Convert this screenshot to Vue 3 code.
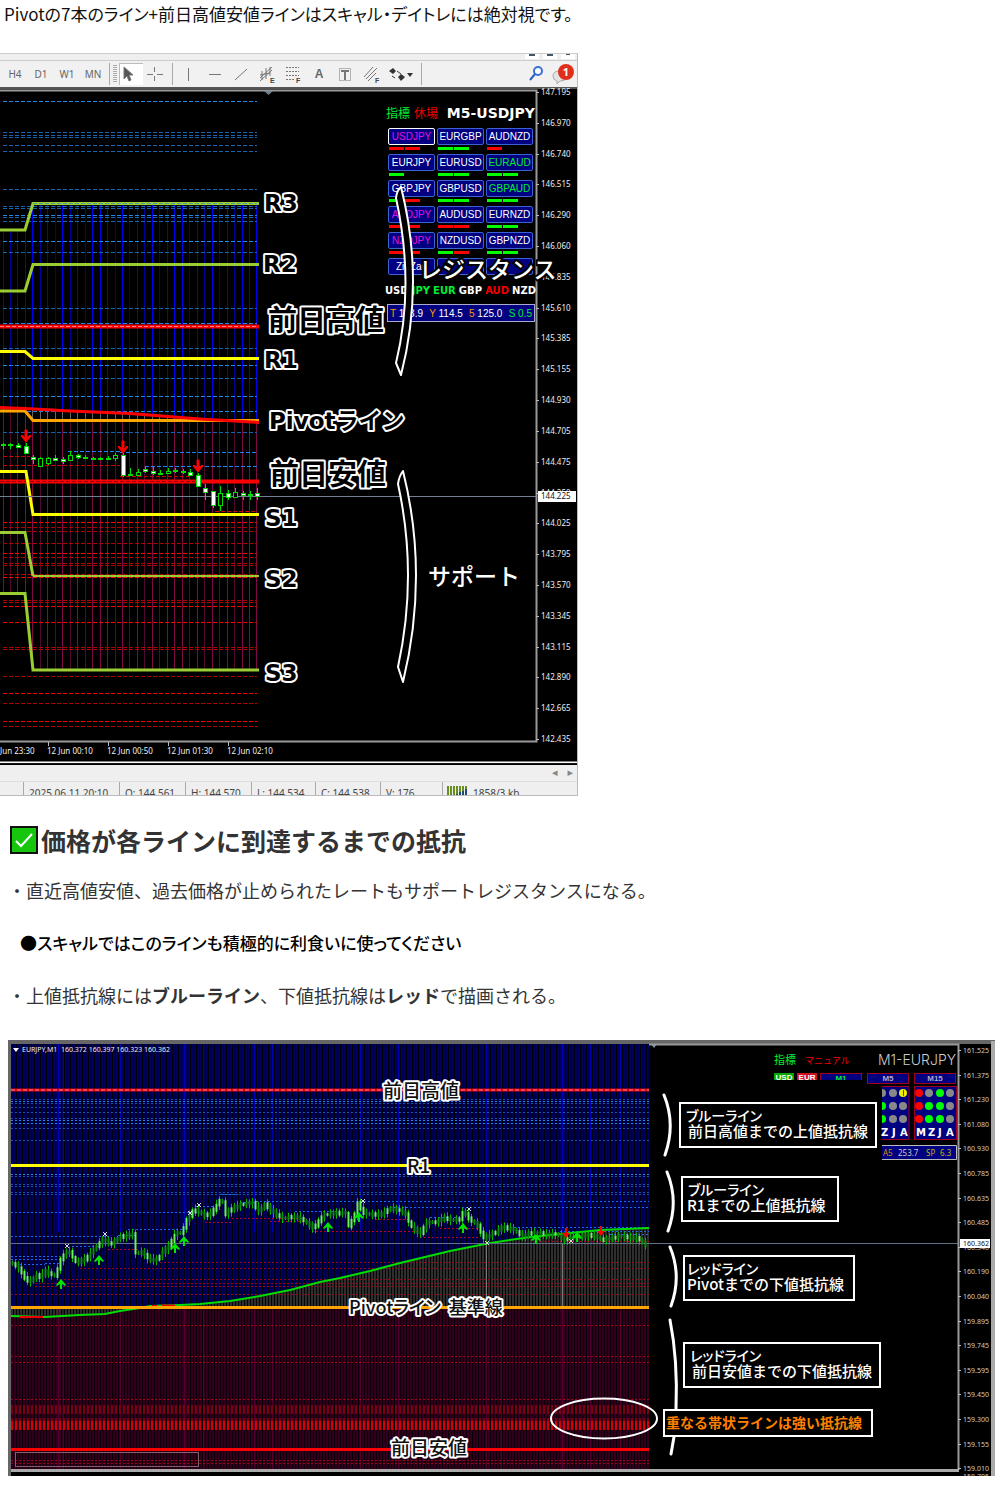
<script setup>
const blueLevels = [
  [101, 1], [132, 0], [135, 0], [137, 0], [145, 0], [151, 0], [189, 0], [206, 0], [208, 0], [215, 1], [217, 0], [221, 0],
  [241, 1], [252, 0], [308, 0], [323, 1], [348, 0], [365, 1], [378, 0], [396, 1], [411, 1], [432, 0],
]
const redLevels = [
  [522, 1], [527, 0], [531, 0], [543, 0], [553, 1], [557, 0], [563, 0], [565, 0], [574, 0], [577, 1], [600, 0], [602, 0],
  [606, 1], [622, 1], [647, 0], [649, 0], [676, 0], [693, 1], [703, 0], [721, 1], [726, 0],
]
const shortLevels = [
  [68, 120, 451, 'b'], [120, 257, 452, 'b'], [145, 257, 466, 'b'],
  [3, 30, 456, 'r'], [3, 120, 465, 'r'], [120, 190, 476, 'r'], [215, 257, 511, 'r'],
]

const maY = (x) => (x < 130 ? 407 + x * 0.05 : 413.5 + (x - 130) * 0.07)
const bars = Array.from({ length: 35 }, (_, i) => {
  const x = Math.floor(3 + i * 7.47) + 0.5
  const early = x < 30
  return {
    x,
    top: early ? 230 : 204,
    mid: maY(x),
    pivot: early ? 411 : Math.max(420, maY(x)),
    bottom: early ? 593 : 670,
    bright: i % 2 === 0 || i % 5 === 3,
  }
})

// x, high, low, body top, body bottom, kind (f filled, h hollow)
const candles = [
  [3, 443, 449, 444, 445, 'h'], [10, 443, 449, 444, 445, 'h'], [18, 443, 448, 445, 447, 'f'], [26, 443, 454, 446, 453, 'f'],
  [33, 455, 464, 457, 459, 'f'], [40, 457, 467, 458, 466, 'h'], [48, 457, 465, 458, 463, 'h'], [55, 455, 461, 458, 460, 'f'],
  [63, 457, 464, 459, 461, 'f'], [70, 451, 461, 455, 460, 'h'], [78, 454, 459, 455, 457, 'f'], [85, 455, 459, 457, 458, 'h'],
  [93, 457, 459, 458, 459, 'h'], [100, 457, 459, 458, 459, 'h'], [108, 456, 460, 458, 459, 'h'], [115, 453, 461, 455, 458, 'h'],
  [123, 452, 477, 455, 475, 'f'], [130, 468, 476, 474, 475, 'h'], [138, 469, 476, 472, 475, 'h'], [145, 467, 473, 469, 471, 'f'],
  [153, 467, 475, 471, 473, 'f'], [160, 470, 475, 473, 474, 'h'], [168, 468, 474, 471, 473, 'h'], [175, 468, 473, 470, 471, 'h'],
  [183, 469, 474, 471, 472, 'f'], [190, 469, 476, 472, 475, 'f'], [198, 473, 487, 475, 486, 'f'], [205, 484, 500, 488, 492, 'f'],
  [213, 491, 508, 491, 505, 'f'], [220, 486, 511, 493, 505, 'h'], [228, 490, 500, 493, 497, 'f'], [235, 488, 498, 492, 497, 'h'],
  [243, 491, 500, 493, 495, 'f'], [250, 491, 500, 494, 495, 'h'], [257, 488, 500, 493, 496, 'f'],
]
const sellMarks = [[26, 442], [123, 453], [198, 472]]

const prices = ['147.195', '146.970', '146.740', '146.515', '146.290', '146.060', '145.835', '145.610', '145.385', '145.155',
  '144.930', '144.705', '144.475', '144.250', '144.025', '143.795', '143.570', '143.345', '143.115', '142.890', '142.665', '142.435']
const times = ['12 Jun 00:10', '12 Jun 00:50', '12 Jun 01:30', '12 Jun 02:10']

const pairs = [
  ['USDJPY', 'm', 'rr'], ['EURGBP', 'w', 'gg'], ['AUDNZD', 'w', 'r'],
  ['EURJPY', 'w', 'g'], ['EURUSD', 'w', 'gg'], ['EURAUD', 'g', 'gg'],
  ['GBPJPY', 'w', 'gr'], ['GBPUSD', 'w', 'gg'], ['GBPAUD', 'g', 'gg'],
  ['AUDJPY', 'm', 'rr'], ['AUDUSD', 'w', 'rr'], ['EURNZD', 'w', 'gg'],
  ['NZDJPY', 'm', 'rr'], ['NZDUSD', 'w', 'gr'], ['GBPNZD', 'w', 'gg'],
  ['ZigZag', 'w', ''], ['', 'w', ''], ['', 'g', ''],
]
const currencies = [['USD', 'w'], ['JPY', 'g'], ['EUR', 'g'], ['GBP', 'w'], ['AUD', 'r'], ['NZD', 'w']]
const readings = [['T', '113.9', 'o'], ['Y', '114.5', 'o'], ['5', '125.0', 'o']]

const lineLabels = [
  ['R3', 264, 211, 'wide'], ['R2', 263, 272, 'wide'], ['前日高値', 268, 331, 'kanji'], ['R1', 264, 368, 'wide'],
  ['Pivotライン', 269, 429, 'wide'], ['前日安値', 270, 485, 'kanji'], ['S1', 265, 526, 'wide'], ['S2', 265, 587, 'wide'], ['S3', 265, 681, 'wide'],
]

const status = [['', 24], ['2025.06.11 20:10', 96], ['O: 144.561', 66], ['H: 144.570', 66], ['L: 144.534', 64], ['C: 144.538', 65], ['V: 176', 62]]

// ---- EURJPY chart ----
const blue2 = [[1099, 0], [1101, 1], [1103, 0], [1107, 0], [1112, 0], [1118, 0], [1120, 1], [1123, 1], [1128, 0], [1140, 0],
  [1174, 1], [1176, 0], [1184, 0], [1186, 0], [1192, 0], [1194, 0]]
const blueParts = [[11, 200, 1212], [11, 110, 1236], [11, 60, 1256], [11, 60, 1259], [20, 45, 1264], [45, 60, 1263], [72, 98, 1246],
  [118, 135, 1235], [128, 182, 1229], [195, 215, 1206], [221, 238, 1194], [240, 256, 1202], [256, 649, 1201], [295, 340, 1211], [390, 649, 1207],
  [430, 460, 1217], [510, 649, 1227], [560, 649, 1231], [610, 649, 1234]]
const red2 = [[1262, 160], [1268, 80], [1279, 60], [1283, 35], [1286, 35], [1294, 11], [1325, 11], [1356, 11], [1362, 11], [1399, 11], [1460, 11], [1463, 11]]
const redBand = [[1406, 0], [1409, 0], [1412, 0], [1419, 0], [1422, 1], [1425, 1], [1428, 1]]
const redParts = [[108, 138, 1249], [205, 232, 1222], [232, 308, 1218], [270, 310, 1221], [312, 420, 1231], [375, 410, 1219], [420, 480, 1237], [440, 480, 1228], [540, 649, 1241]]

const trace = [[11, 1262], [20, 1266], [25, 1275], [32, 1283], [38, 1275], [43, 1278], [47, 1270], [52, 1274], [58, 1276], [62, 1262],
  [67, 1253], [72, 1252], [78, 1262], [82, 1262], [90, 1257], [98, 1247], [105, 1240], [115, 1244], [120, 1238], [128, 1236], [135, 1234],
  [138, 1253], [145, 1252], [150, 1258], [158, 1261], [165, 1252], [172, 1245], [178, 1233], [184, 1233], [190, 1218], [197, 1209],
  [203, 1213], [208, 1216], [214, 1213], [219, 1205], [224, 1198], [228, 1214], [235, 1208], [245, 1204], [255, 1203], [262, 1212],
  [267, 1204], [275, 1212], [285, 1218], [300, 1217], [308, 1222], [315, 1228], [320, 1223], [325, 1215], [340, 1213], [348, 1213],
  [350, 1228], [357, 1215], [360, 1203], [366, 1213], [375, 1215], [385, 1214], [393, 1208], [407, 1212], [413, 1226], [422, 1234],
  [430, 1222], [440, 1222], [446, 1217], [452, 1220], [462, 1220], [466, 1210], [472, 1220], [479, 1224], [486, 1238], [495, 1234],
  [505, 1227], [515, 1229], [525, 1236], [535, 1232], [545, 1234], [560, 1234], [566, 1240], [575, 1237], [595, 1235], [605, 1240],
  [622, 1236], [632, 1238], [640, 1238], [649, 1246]]
const priceAt = (x) => {
  const i = Math.max(1, trace.findIndex((p) => p[0] >= x))
  const [a, b] = [trace[i - 1], trace[i]]
  return a[1] + ((b[1] - a[1]) * (x - a[0])) / (b[0] - a[0])
}
const ticks2 = Array.from({ length: 212 }, (_, i) => {
  const x = 12 + i * 3
  const y0 = priceAt(x)
  const y1 = priceAt(Math.min(649, x + 3))
  const w = (n) => ((i * n) % 7) / 2
  const top = Math.min(y0, y1) - 1 - w(3) / 2
  const bottom = Math.max(y0, y1) + 1 + w(5) / 2
  return { x, top, bottom, hi: top - w(4) - 1, lo: bottom + w(2) + 1, light: i % 4 === 1 || bottom - top > 8 }
})
const ma = '11,1316 45,1317 80,1315 105,1314 120,1311 140,1308 150,1306 180,1305 200,1304 230,1301 260,1296 290,1290 320,1282 340,1278 370,1271 400,1263 450,1251 490,1243 530,1237 570,1233 600,1230 649,1228'
const brightBars = [58, 63, 120, 184, 203, 254, 272, 360, 398, 486, 501, 562, 590, 620]
const buyMarks = [[61, 1279], [99, 1255], [175, 1243], [184, 1236], [328, 1222], [359, 1212], [463, 1223], [536, 1234], [577, 1232]]
const sellMarks2 = [[566, 1238], [601, 1236]]
const crosses = [[67, 1246], [105, 1234], [190, 1213], [199, 1205], [363, 1201], [469, 1209], [487, 1243], [571, 1241]]
const prices2 = ['161.525', '161.375', '161.230', '161.080', '160.930', '160.785', '160.635', '160.485', '160.340', '160.190',
  '160.040', '159.895', '159.745', '159.595', '159.450', '159.300', '159.155', '159.010']
const dots = [
  [882, 1093, 'n'], [893, 1093, 'n'], [903, 1093, 'y'], [882, 1106, 'g'], [893, 1106, 'n'], [903, 1106, 'n'],
  [882, 1119, 'g'], [893, 1119, 'n'], [903, 1119, 'n'],
  [919, 1093, 'r'], [929, 1093, 'n'], [940, 1093, 'g'], [950, 1093, 'n'],
  [919, 1106, 'r'], [929, 1106, 'g'], [940, 1106, 'g'], [950, 1106, 'n'],
  [919, 1119, 'r'], [929, 1119, 'g'], [940, 1119, 'g'], [950, 1119, 'n'],
]
const notes = [
  { x: 680, y: 1103, w: 196, a: 'ブルーライン', b: '前日高値までの上値抵抗線' },
  { x: 682, y: 1177, w: 156, a: 'ブルーライン', b: 'R1までの上値抵抗線', tight: true },
  { x: 684, y: 1256, w: 170, a: 'レッドライン', b: 'Pivotまでの下値抵抗線', edge: true },
  { x: 684, y: 1343, w: 196, a: 'レッドライン', b: '前日安値までの下値抵抗線' },
]
</script>

<template>
  <main class="article">
    <p class="lead">Pivotの7本のライン+前日高値安値ラインはスキャル・デイトレには絶対視です。</p>

    <figure class="terminal">
      <div class="titlebar"><i class="min"></i><i class="max"></i><i class="close"></i></div>
      <div class="toolbar">
        <button v-for="t in ['H4', 'D1', 'W1', 'MN']" :key="t" class="tool">{{ t }}</button>
        <i class="rule"></i><i class="grip"></i>
        <button class="tool pressed" aria-label="Cursor">
          <svg viewBox="0 0 24 22"><path d="M5 4v12l3-3 2 5 2-1-2-5h4z" fill="#555" /></svg>
        </button>
        <button class="tool" aria-label="Crosshair"><svg viewBox="0 0 24 22"><path d="M10.500 4v5m0 4v5M3 11.500h6m4 0h6" /></svg></button>
        <i class="rule"></i>
        <button class="tool" aria-label="Vertical line"><svg viewBox="0 0 24 22"><path d="M11.500 5v13" /></svg></button>
        <button class="tool" aria-label="Horizontal line"><svg viewBox="0 0 24 22"><path d="M6 11.500h12" /></svg></button>
        <button class="tool" aria-label="Trend line"><svg viewBox="0 0 24 22"><path d="M6 17L18 6" /></svg></button>
        <button class="tool" aria-label="Channel">
          <svg viewBox="0 0 24 22"><path d="M5 15L17 4M5 18l12-11M7 8v9M11 5v11M15 4v9M5 12l10-2" /><text x="15" y="20">E</text></svg>
        </button>
        <button class="tool" aria-label="Fibonacci">
          <svg viewBox="0 0 24 22"><path d="M5 4.500h13M5 8.500h13M5 12.500h13M5 16.500h9" stroke-dasharray="2 1" /><text x="15" y="20">F</text></svg>
        </button>
        <button class="tool letter">A</button>
        <button class="tool" aria-label="Text label">
          <svg viewBox="0 0 24 22"><path d="M6.500 5.500h11v12h-11z" stroke-dasharray="1 1" /><path d="M8 8h8M12 8v9" stroke-width="2" /></svg>
        </button>
        <button class="tool" aria-label="Fan">
          <svg viewBox="0 0 24 22"><path d="M5 14L14 4M7 16L18 5M9 18l8-8" /><text x="16" y="20">F</text></svg>
        </button>
        <button class="tool drop" aria-label="Arrows">
          <svg viewBox="0 0 30 22"><path d="M3 8l4-3 3 3-3 3zM12 14l3-3 4 3-4 4zM21 10h6l-3 4z" fill="#333" stroke="none" /><path d="M6 13l3 2M11 8l4 3" stroke="#333" /></svg>
        </button>
        <i class="rule"></i>
        <span class="grow"></span>
        <button class="tool" aria-label="Search">
          <svg viewBox="0 0 24 22"><circle cx="14" cy="8" r="4" fill="#fff" stroke="#3a6fd8" stroke-width="2" /><path d="M11 11l-5 6" stroke="#2d5fc4" stroke-width="2" /></svg>
        </button>
        <button class="tool alert" aria-label="Notifications">
          <svg viewBox="0 0 28 22"><path d="M4 13q0-5 7-5t7 5-7 5l-3 3v-3q-4-1-4-5z" fill="#e4e4e4" stroke="#aaa" /><circle cx="17" cy="9" r="8" fill="#e0301c" stroke="none" /></svg>
          <b>1</b>
        </button>
      </div>

      <svg class="chart" viewBox="0 87 577 678" role="img" aria-label="M5-USDJPY">
        <rect x="0" y="87" width="577" height="678" />
        <rect x="0" y="87" width="577" height="2" fill="#555" />
        <path d="M0 90.500H536.500V741.500H0" fill="none" stroke="#999" stroke-width="2" />
        <path d="M264 91h9l-4.500 4z" fill="#708090" />

        <g v-for="b in bars" :key="b.x">
          <path :d="`M${b.x} ${b.top}V${b.mid}`" :stroke="b.bright ? '#0000f0' : '#000098'" />
          <path :d="`M${b.x} ${b.mid}V${b.pivot}`" stroke="#666" />
          <path :d="`M${b.x} ${b.pivot}V${b.bottom}`" :stroke="b.bright ? '#7d0c46' : '#500a32'" />
        </g>
        <path v-for="l in blueLevels" :key="'b' + l[0]" class="dash" :d="`M3 ${l[0] + 0.5}H257`" :stroke="l[1] ? '#2088e8' : '#1763ae'" />
        <path v-for="l in redLevels" :key="'r' + l[0]" class="dash" :d="`M3 ${l[0] + 0.5}H257`" :stroke="l[1] ? '#f00' : '#b00000'" />
        <path v-for="(l, i) in shortLevels" :key="'s' + i" class="dash" :d="`M${l[0]} ${l[2] + 0.5}H${l[1]}`" :stroke="l[3] === 'b' ? '#1e82ff' : '#c00'" />

        <g fill="none" stroke-width="3">
          <g stroke="#9acd32">
            <path d="M0 230H25L33 203.500H259M0 291H25L33 264.500H259M0 593.500H25L33 670H259" />
            <path d="M0 532.500H25L33 576" /><path d="M33 576H259" stroke-width="2" />
          </g>
          <path class="dash" d="M33 203.500H257" stroke="#4f9f9c" stroke-width="1" />
          <path d="M0 326.500H259M0 481.500H259" stroke="#f00" stroke-width="4" />
          <path class="dash" d="M0 326.500H257" stroke="#ff8080" stroke-width="1" />
          <path class="dash" d="M0 481.500H195" stroke="#900" stroke-width="1" />
          <path d="M0 351.500H25L33 358.500H259M0 471.500H26L33 514.500H259" stroke="#ff0" />
          <path d="M0 411H25L33 420.500H259" stroke="#ffa500" />
          <path d="M0 407.500L25 408.500 70 411 130 413.500 200 419 259 422.500" stroke="#f00" />
        </g>
        <path d="M0 496.500H536" stroke="#708090" />

        <g v-for="c in candles" :key="c[0]" stroke="#0d0">
          <path :d="`M${c[0] + 0.5} ${c[1]}V${c[2]}`" />
          <rect :x="c[0] - 1.5" :y="c[3] + 0.5" width="4" :height="c[4] - c[3]" :fill="c[5] === 'f' ? '#fff' : '#000'" />
        </g>
        <path v-for="m in sellMarks" :key="m[0]" :d="`M${m[0]} ${m[1]}l-5-6 1-1 3 3v-8h2v8l3-3 1 1z`" fill="#f00" stroke="#f00" />

        <g class="axis">
          <g v-for="(p, i) in prices" :key="p">
            <path :d="`M536 ${92.5 + i * 31 - Math.round(i * 0.19)}h3`" stroke="#bbb" />
            <text x="541" :y="95 + i * 31 - Math.round(i * 0.19)">{{ p }}</text>
          </g>
          <rect x="538" y="491" width="38" height="11" fill="#fff" />
          <text x="541" y="499" class="ink">144.225</text>
          <text x="0" y="754">Jun 23:30</text>
          <g v-for="(t, i) in times" :key="t">
            <path :d="`M${48.5 + i * 60} 742v4`" stroke="#bbb" />
            <text :x="47 + i * 60" y="754">{{ t }}</text>
          </g>
        </g>
        <path d="M0 762.500H577" stroke="#fff" stroke-width="2" />
        <path d="M0 763.500H577" stroke="#111" />

        <foreignObject x="385" y="102" width="151" height="222">
          <div class="panel">
            <div class="panel-head"><span class="g">指標</span><span class="r">休場</span><b>M5-USDJPY</b></div>
            <div class="pairs">
              <div v-for="(p, i) in pairs" :key="i" class="pair">
                <button :class="[p[1], { active: i === 0 }]">{{ p[0] }}</button>
                <div class="trend"><i v-for="(c, j) in p[2]" :key="j" :class="c"></i></div>
              </div>
            </div>
            <div class="ccy"><span v-for="c in currencies" :key="c[0]" :class="c[1]">{{ c[0] }}</span></div>
            <div class="reads">
              <span v-for="r in readings" :key="r[0]"><i class="o">{{ r[0] }}</i> {{ r[1] }}</span>
              <span class="g">S 0.5</span>
            </div>
          </div>
        </foreignObject>

        <g fill="#000" stroke="#fff" stroke-width="2" stroke-linejoin="round">
          <path d="M401 187Q397 190 396 198Q415 285 396 363L401 375Q425 282 401 187Z" />
          <path d="M403 471Q399 476 398 484Q418 575 398 667L403 682Q429 575 403 471Z" />
        </g>
        <text v-for="l in lineLabels" :key="l[0]" :x="l[1]" :y="l[2]" :class="['tag', l[3]]">{{ l[0] }}</text>
        <text x="419" y="278" class="side">レジスタンス</text>
        <text x="428" y="585" class="side">サポート</text>
      </svg>

      <div class="scroll"><span>◂</span><span>▸</span></div>
      <div class="status">
        <span v-for="s in status" :key="s[0]" :style="{ width: s[1] + 'px' }">{{ s[0] }}</span>
        <svg viewBox="0 0 22 12"><path d="M1 0v12M4 0v12M7 0v12M10 0v12M13 0v12M16 0v12M19 0v12" stroke="#6b8e23" stroke-width="2" /><path d="M7 12v-3M10 12V8M13 12V6M16 12V5M19 12V3" stroke="#1b4f72" stroke-width="2" /></svg>
        <em>1858/3 kb</em>
      </div>
    </figure>

    <h2>
      <svg viewBox="0 0 28 28" aria-hidden="true"><rect x="1" y="1" width="26" height="26" fill="#16c60c" stroke="#111" stroke-width="2" /><path d="M6 15l5 5L22 8" fill="none" stroke="#fff" stroke-width="2" /></svg>価格が各ラインに到達するまでの抵抗
    </h2>
    <p class="body">・直近高値安値、過去価格が止められたレートもサポートレジスタンスになる。</p>
    <p class="point">●スキャルではこのラインも積極的に利食いに使ってください</p>
    <p class="body">・上値抵抗線には<strong>ブルーライン</strong>、下値抵抗線は<strong>レッド</strong>で描画される。</p>

    <figure class="wide-chart">
      <svg class="chart" viewBox="8 1040 987 436" role="img" aria-label="M1-EURJPY">
        <defs>
          <pattern id="navy" width="6" height="10" patternUnits="userSpaceOnUse"><rect width="6" height="10" fill="#000058" /><path d="M1.500 0v10M4.500 0v10" stroke="#00000a" /></pattern>
          <pattern id="wine" width="6" height="10" patternUnits="userSpaceOnUse"><rect width="6" height="10" fill="#30001c" /><path d="M1.500 0v10M4.500 0v10" stroke="#0a0006" /></pattern>
          <pattern id="ash" width="6" height="10" patternUnits="userSpaceOnUse"><rect width="6" height="10" fill="#2e2e2e" /><path d="M1.500 0v10M4.500 0v10" stroke="#060606" /></pattern>
        </defs>
        <rect x="8" y="1040" width="987" height="436" fill="#666" />
        <rect x="11" y="1044" width="980" height="432" />
        <rect x="991" y="1041" width="4" height="435" fill="#aaa" />
        <rect x="11" y="1044" width="638" height="264" fill="url(#navy)" />
        <rect x="11" y="1308" width="638" height="161" fill="url(#wine)" />
        <polygon :points="ma + ' 649,1308 11,1308'" fill="url(#ash)" />
        <path v-for="b in brightBars" :key="b" :d="`M${b + 0.5} 1044V1232`" stroke="#0000b4" />
        <path v-for="b in brightBars" :key="'w' + b" :d="`M${b + 0.5} 1309V1469`" stroke="#520030" />
        <path d="M486.500 1245V1306M562.500 1244V1306" stroke="#777" />

        <g class="dots">
          <path v-for="l in blue2" :key="l[0]" :d="`M11 ${l[0] + 0.5}H649`" :stroke="l[1] ? '#2484dc' : '#1a55a4'" />
          <path v-for="(l, i) in blueParts" :key="'bp' + i" :d="`M${l[0]} ${l[2] + 0.5}H${l[1]}`" stroke="#1c6ae8" />
          <path v-for="l in red2" :key="l[0]" :d="`M${l[1]} ${l[0] + 0.5}H649`" stroke="#a00018" />
          <path v-for="l in redBand" :key="l[0]" :d="`M11 ${l[0] + 0.5}H649`" :stroke="l[1] ? '#d80000' : '#780010'" stroke-width="3" />
          <path v-for="(l, i) in redParts" :key="'rp' + i" :d="`M${l[0]} ${l[2] + 0.5}H${l[1]}`" stroke="#b80020" />
        </g>

        <g fill="none" stroke-width="3">
          <path d="M11 1090H649" stroke="#e00010" /><path d="M11 1165.500H649" stroke="#ff0" />
          <path d="M11 1449.500H649" stroke="#f00" />
          <path class="dash" d="M11 1090H649" stroke="#ff8a8a" stroke-width="1" />
          <polyline :points="ma" stroke="#0d0" stroke-width="2" />
          <path d="M20 1317H43M152 1306H157M162 1305.500H175" stroke="#e00" stroke-width="2" />
          <path d="M11 1307.500H649" stroke="#ffa500" />
        </g>
        <path d="M11 1243.500H958" stroke="#63708a" />
        <g v-for="t in ticks2" :key="t.x">
          <path :d="`M${t.x + 0.5} ${t.hi}V${t.lo}`" stroke="#0b0" />
          <rect :x="t.x - 0.5" :y="t.top" width="2" :height="t.bottom - t.top" :fill="t.light ? '#6df05a' : '#0a8a0a'" />
        </g>
        <path v-for="m in buyMarks" :key="'u' + m[0]" :d="`M${m[0]} ${m[1]}l5 6-1 1-3-2v5h-2v-5l-3 2-1-1z`" fill="#00e600" />
        <path v-for="m in sellMarks2" :key="'d' + m[0]" :d="`M${m[0]} ${m[1]}l4-5h-3v-5h-2v5h-3z`" fill="#f00" />
        <path v-for="m in crosses" :key="'x' + m[0]" :d="`M${m[0] - 2} ${m[1] - 2}l4 4m0-4l-4 4`" stroke="#ddd" />

        <rect x="15.500" y="1452.500" width="183" height="14" fill="none" stroke="#80606a" />
        <path d="M13 1048h6l-3 4z" fill="#fff" />
        <text x="22" y="1052" class="quote">EURJPY,M1&#160; 160.372 160.397 160.323 160.362</text>
        <path d="M651 1044h6l-3 4z" fill="#8095a8" />
        <path d="M649 1044.500H958.500V1470" fill="none" stroke="#999" stroke-width="2" />
        <path d="M11 1470.500H959" stroke="#aaa" stroke-width="3" />

        <g class="axis small">
          <g v-for="(p, i) in prices2" :key="p">
            <path :d="`M958 ${1050.5 + Math.round(i * 24.6)}h3`" stroke="#bbb" />
            <text x="963" :y="1053 + Math.round(i * 24.6)">{{ p }}</text>
          </g>
          <text x="963" y="1479">158.705</text>
          <rect x="960" y="1239" width="30" height="9" fill="#fff" /><text x="963" y="1246" class="ink">160.362</text>
        </g>

        <text x="774" y="1064" class="head g">指標</text>
        <text x="805" y="1064" class="head r small-kana">マニュアル</text>
        <text x="878" y="1065" class="symbol">M1-EURJPY</text>
        <foreignObject x="774" y="1073" width="92" height="7">
          <div class="frames"><span class="bg-g">USD</span><span class="bg-r">EUR</span><button class="g">M1</button></div>
        </foreignObject>
        <foreignObject x="867" y="1073" width="90" height="11">
          <div class="frames"><button>M5</button><button>M15</button></div>
        </foreignObject>
        <path d="M882 1086.500H909V1139.500H882" fill="#000080" stroke="#a00020" />
        <rect x="914.500" y="1086.500" width="42" height="53" fill="#000080" stroke="#a00020" />
        <circle v-for="d in dots" :key="d[0] + '-' + d[1]" :cx="d[0]" :cy="d[1]" r="4" :class="'dot-' + d[2]" />
        <rect x="874" y="1088" width="8" height="48" />
        <path d="M903.500 1090v6" stroke="#665500" />
        <g class="letters">
          <text x="881" y="1136">Z</text><text x="892" y="1136">J</text><text x="900" y="1136">A</text>
          <text x="916" y="1136">M</text><text x="928" y="1136">Z</text><text x="938" y="1136">J</text><text x="946" y="1136">A</text>
        </g>
        <path d="M882 1145.500H956.500V1159.500H882" fill="#000080" stroke="#bbb" />
        <g class="mini"><text x="883" y="1156" class="o">A5</text><text x="898" y="1156">253.7</text><text x="926" y="1156" class="y">SP</text><text x="940" y="1156" class="y">6.3</text></g>

        <g fill="none" stroke="#fff" stroke-width="3" stroke-linecap="round">
          <path d="M664 1095Q676 1124 665 1155M667 1172Q679 1201 668 1231M670 1247Q682 1276 671 1306" />
          <path d="M670 1320Q678 1360 676 1409M675 1431L671 1454" />
        </g>
        <ellipse cx="604" cy="1418.500" rx="53" ry="20" fill="none" stroke="#fff" stroke-width="2" />
        <g v-for="n in notes" :key="n.y">
          <rect :x="n.x" :y="n.y" :width="n.w" height="44" stroke="#fff" stroke-width="2" />
          <text :x="n.x + (n.edge ? 3 : 6)" :y="n.y + 18" class="note kana">{{ n.a }}</text>
          <text :x="n.x + (n.edge ? 3 : n.tight ? 5 : 8)" :y="n.y + 34" class="note">{{ n.b }}</text>
        </g>
        <rect x="664" y="1410" width="208" height="26" stroke="#fff" stroke-width="2" />
        <text x="666" y="1428" class="note orange">重なる帯状ラインは強い抵抗線</text>

        <text x="383" y="1098" class="label">前日高値</text>
        <text x="407" y="1173" class="label">R1</text>
        <text x="349" y="1314" class="label pivot">Pivotライン&#160; 基準線</text>
        <text x="391" y="1455" class="label">前日安値</text>
      </svg>
    </figure>
  </main>
</template>

<style>
body { background: #fff; }
</style>

<style scoped>
.article { font-family: "Noto Sans CJK JP", sans-serif; color: #333; padding-bottom: 11px; overflow: hidden; }
p, h2, figure { margin: 0; }
button { margin: 0; padding: 0; border: 0; background: none; font: inherit; color: inherit; }
.lead { padding-left: 4px; font-size: 17px; line-height: 28px; min-height: 53px; color: #111; font-feature-settings: "palt"; box-sizing: border-box; }
.terminal { max-width: 577px; border-right: 1px solid #bbb; }
.chart { display: block; width: 100%; height: auto; }

.titlebar { display: flex; justify-content: flex-end; gap: 4px; height: 8px; padding-right: 2px; box-sizing: border-box; background: #efefef; border-top: 1px solid #ccc; border-bottom: 1px solid #ccc; }
.titlebar i { width: 14px; height: 5px; background: #fff linear-gradient(#456, #456) no-repeat center top / 6px 2px; }
.titlebar .close { background-size: 4px 1px; }
.toolbar { display: flex; align-items: center; height: 26px; background: #f1f1f1; padding-left: 2px; font-family: "Noto Sans", sans-serif; color: #666; }
.tool { width: 26px; height: 22px; flex: none; font-size: 10px; line-height: 22px; text-align: center; }
.tool svg { display: block; width: 24px; height: 22px; margin: 0 auto; fill: none; stroke: #777; }
.tool svg text { font: bold 7px "Liberation Sans", sans-serif; fill: #444; stroke: none; }
.pressed { width: 24px; margin-left: 2px; background: #fff; box-shadow: inset 1px 1px #bbb; }
.letter { font: bold 12px/22px "Liberation Sans", sans-serif; }
.drop { width: 34px; }
.drop svg { width: 30px; }
.rule { width: 1px; height: 22px; background: #aaa; margin: 0 3px; }
.grip { width: 4px; height: 18px; background: repeating-linear-gradient(#aaa 0 1px, #f1f1f1 1px 2px); }
.grow { flex: 1; }
.alert { position: relative; width: 28px; }
.alert svg { width: 28px; }
.alert b { position: absolute; left: 9px; top: 0; width: 16px; font-size: 11px; line-height: 17px; color: #fff; text-align: center; }

.dash { stroke-dasharray: 4 2; }
.dots path { stroke-dasharray: 2 2; }
.axis text { font: 8px "Noto Sans", sans-serif; fill: #eee; }
.axis.small text { font-size: 7px; fill: #ccc; }
.axis text.ink { fill: #111; }
.tag { fill: #000; stroke: #fff; stroke-width: 4px; stroke-linejoin: round; paint-order: stroke; font-weight: bold; }
.wide { font: bold 23px "DejaVu Sans", "Noto Sans CJK JP", sans-serif; }
.kanji { font-size: 29px; }
.side { font-size: 23px; font-weight: 500; fill: #fff; stroke: #000; stroke-width: 4px; paint-order: stroke; }

.panel { display: flex; flex-direction: column; color: #fff; }
.panel-head { display: flex; justify-content: space-between; align-items: center; height: 22px; padding: 0 1px; font-size: 12px; line-height: 22px; }
.panel-head b { font: bold 14px/22px "DejaVu Sans", sans-serif; margin-left: 5px; }
.pairs { display: grid; grid-template-columns: repeat(3, 1fr); column-gap: 2px; padding: 4px 3px 0; }
.pair { height: 26px; }
.pair button { display: block; width: 100%; height: 17px; border: 1px solid #3a62d0; border-radius: 2px; background: #000080; font: 10px/15px "Liberation Sans", sans-serif; }
.pair button.active { border-color: #fff; }
.pair .m { color: #e010e0; }
.pair .w { color: #fff; }
.trend { display: flex; gap: 1px; padding: 2px 1px 0; }
.trend i { width: 15px; height: 3px; }
.trend .r { background: #f00; }
.trend .g { background: #0f0; }
.g { color: #0e3; fill: #0e3; }
.r { color: #e00; fill: #e00; }
.o { color: #f90; fill: #f90; font-style: normal; }
.y { fill: #dd0; }
.ccy { display: flex; justify-content: space-between; font: bold 10px/14px "DejaVu Sans", sans-serif; }
.reads { display: flex; justify-content: space-between; box-sizing: border-box; margin: 6px 1px 0 2px; height: 18px; padding: 0 2px; border: 1px solid #aac; background: #000080; font: 10px/17px "Liberation Sans", sans-serif; }

.scroll { display: flex; justify-content: flex-end; gap: 10px; height: 17px; padding-right: 4px; background: #efefef; font: 11px/15px "DejaVu Sans", sans-serif; color: #888; border-bottom: 1px solid #ddd; box-sizing: border-box; }
.status { display: flex; height: 14px; overflow: hidden; background: #efefef; font: 10px/22px "Noto Sans", sans-serif; color: #444; border-bottom: 1px solid #bbb; box-sizing: border-box; }
.status span { box-sizing: border-box; padding-left: 5px; border-right: 1px solid #aaa; height: 22px; white-space: nowrap; }
.status svg { width: 22px; height: 12px; margin: 4px 4px 0; }
.status em { font-style: normal; }

h2 { display: flex; align-items: center; gap: 3px; margin: 26px 0 0 10px; font-size: 25px; line-height: 36px; font-weight: bold; }
h2 svg { width: 28px; height: 28px; }
.body { padding-left: 8px; margin: 17px 0 0; font-size: 18px; line-height: 30px; }
.body strong { font-weight: bold; }
.point { margin: 22px 0 0 20px; font-size: 17px; line-height: 32px; color: #000; font-weight: 500; font-feature-settings: "palt"; }
.point + .body { margin-top: 21px; }
.wide-chart { margin: 30px 5px 0 8px; }

.quote { font: 7px "Noto Sans", sans-serif; fill: #eee; }
.head { font-size: 11px; }
.small-kana { font-size: 9px; }
.kana { font-feature-settings: "palt"; }
.symbol { font: 300 14px "Inter", "Liberation Sans", sans-serif; fill: #ccc; }
.frames { display: flex; gap: 3px; color: #aac; font: bold 8px/10px "Liberation Sans", sans-serif; }
.frames span { width: 20px; height: 11px; text-align: center; color: #fff; }
.bg-g { background: #0a0; }
.bg-r { background: #d01020; }
.frames button { box-sizing: border-box; width: 42px; height: 11px; border: 1px solid #a00020; background: #000080; line-height: 9px; }
.frames button + button { margin-left: 2px; }
.dot-n { fill: #888; }
.dot-g { fill: #0f0; }
.dot-r { fill: #f00; }
.dot-y { fill: #ee0; }
.letters text { font: bold 10px "DejaVu Sans", sans-serif; fill: #fff; }
.mini text { font: 8px "Noto Sans", sans-serif; fill: #ccc; }
.mini text.o { fill: #d80; }
.mini text.y { fill: #bb0; }
.note { font-size: 15px; font-weight: 500; fill: #fff; }
.note.kana { font-size: 14px; }
.note.orange { font-size: 14px; font-weight: bold; fill: #ff8000; }
.label { font-size: 19px; font-weight: 500; fill: #111; stroke: #fff; stroke-width: 4px; stroke-linejoin: round; paint-order: stroke; }
.label.pivot { font-size: 18px; font-feature-settings: "palt"; }
</style>
